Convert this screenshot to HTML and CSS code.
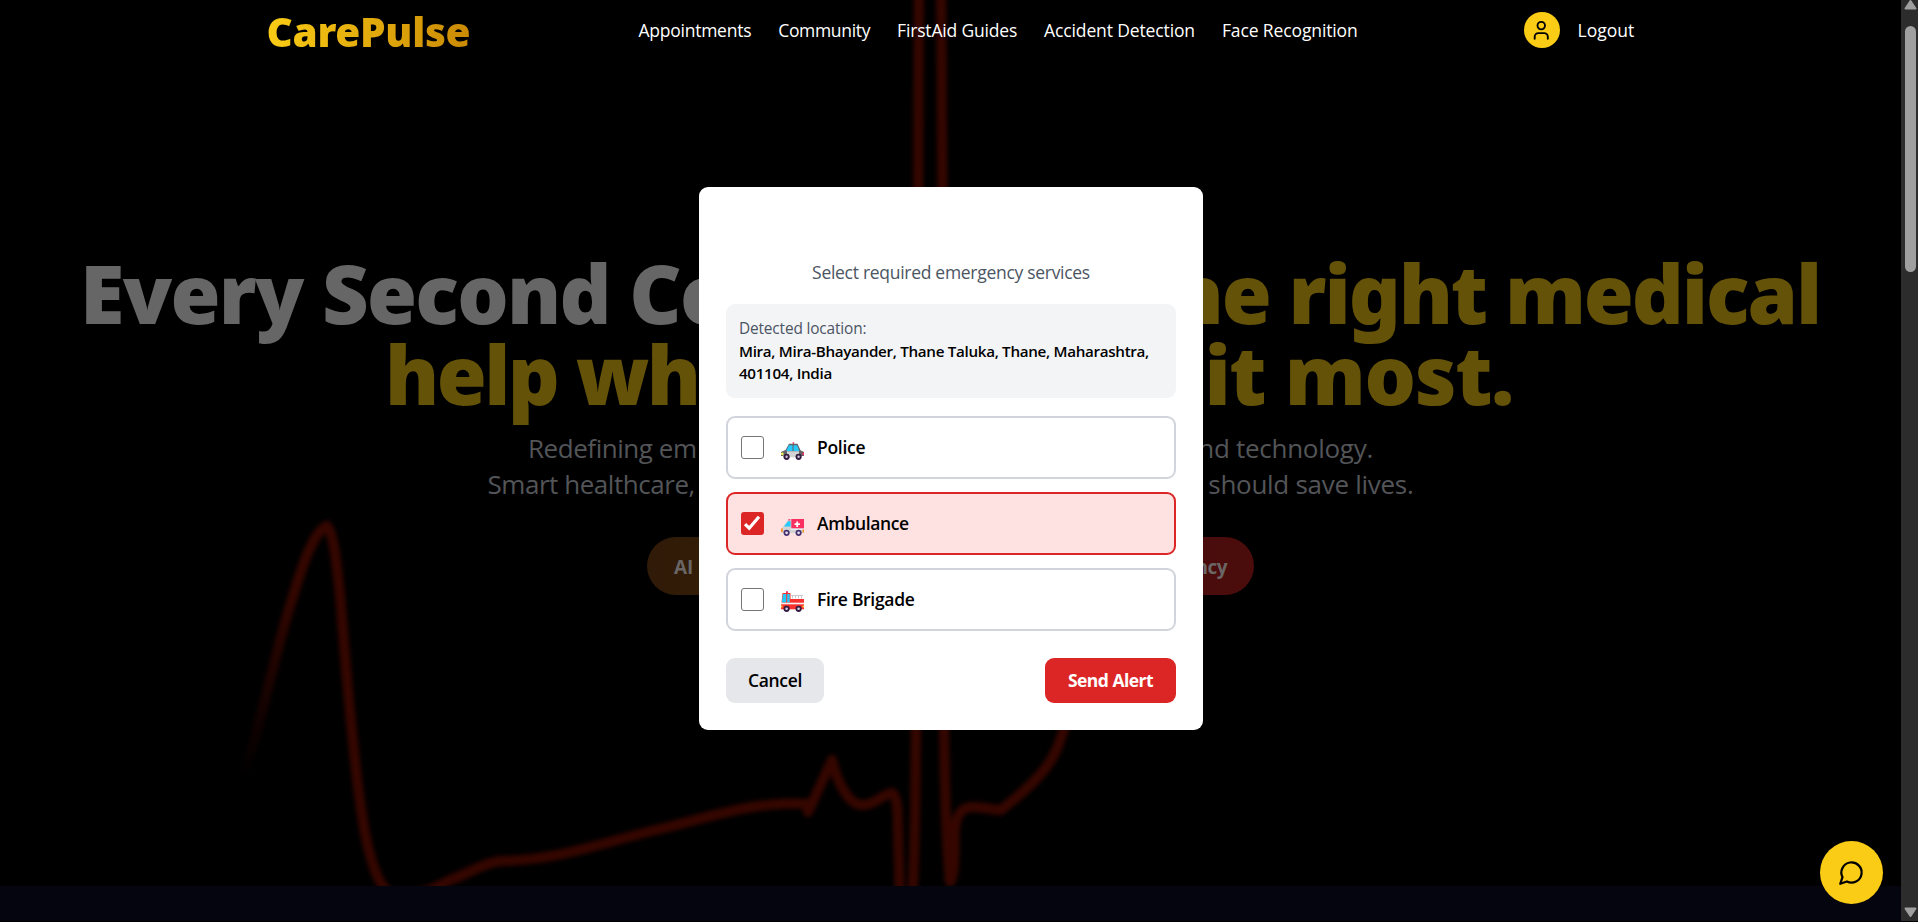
FILE: index.html
```
<!DOCTYPE html>
<html lang="en">
<head>
<meta charset="utf-8">
<title>CarePulse</title>
<link rel="stylesheet" href="styles.css">
</head>
<body>
<div class="page">
  <div class="content">
    <section class="hero">
      <svg class="pulse" viewBox="0 0 1901 886" width="1901" height="886" fill="none">
        <defs>
          <linearGradient id="fade" gradientUnits="userSpaceOnUse" x1="0" y1="780" x2="0" y2="590">
            <stop offset="0" stop-color="#350600" stop-opacity="0"/>
            <stop offset="1" stop-color="#350600"/>
          </linearGradient>
          <filter id="soft" filterUnits="userSpaceOnUse" color-interpolation-filters="sRGB" x="0" y="-60" width="1901" height="1000"><feGaussianBlur stdDeviation="2.2"/></filter>
        </defs>
        <g filter="url(#soft)" stroke-width="10" stroke-linecap="round" stroke-linejoin="round">
          <path stroke="url(#fade)" d="M244 775C262 720 274 657 290 606C300 573 312 532 327 526"/>
          <path stroke="#350600" d="M327 526C333 533 336 556 340 595C345 655 352 750 361 808C366 845 374 874 384 888C398 902 425 894 450 880C470 873 485 862 501 861C560 860 600 843 660 829C710 817 758 800 807 804L808 812L832 760C837 782 849 806 863 805C876 805 884 793 892 793C897 795 898 810 898 830L900 900M912 900C917 840 916 700 919 -20M941 -20C944 200 943 600 944 730C945 800 947 850 950 882C956 875 954 840 955 828C957 812 963 807 973 807C985 807 993 810 1001 810C1015 799 1035 783 1047 766C1057 753 1061 738 1066 722"/>
        </g>
      </svg>
      <header class="navbar">
        <div class="logo">CarePulse</div>
        <nav class="links">
          <a class="l1">Appointments</a><a class="l2">Community</a><a class="l3">FirstAid Guides</a><a class="l4">Accident Detection</a><a class="l5">Face Recognition</a>
        </nav>
        <div class="account">
          <span class="avatar"><svg viewBox="0 0 24 24" width="22.5" height="22.5" fill="none" stroke="#000" stroke-width="2" stroke-linecap="round" stroke-linejoin="round"><path d="M19 21v-2a4 4 0 0 0-4-4H9a4 4 0 0 0-4 4v2"/><circle cx="12" cy="7" r="4"/></svg></span>
          <a>Logout</a>
        </div>
      </header>
      <div class="intro">
        <h1>
          <span class="line first"><span class="t1">Every Second Co</span><span class="gold t2">the right medical</span></span>
          <span class="line second gold"><span class="t3">help wh</span><span class="t4">it most.</span></span>
        </h1>
        <p class="sub suba"><span>Redefining em</span><span class="end">and technology.</span></p>
        <p class="sub subb"><span>Smart healthcare,</span><span class="end">should save lives.</span></p>
        <div class="cta"><span class="pill amber">AI</span><span class="pill red">Emergency</span></div>
      </div>
    </section>
    <section class="next"></section>
    <div class="modal">
      <p class="prompt">Select required emergency services</p>
      <div class="location">
        <p class="label">Detected location:</p>
        <p class="place">Mira, Mira-Bhayander, Thane Taluka, Thane, Maharashtra,<br>401104, India</p>
      </div>
      <div class="options">
        <div class="option">
          <span class="box"></span>
          <svg class="emoji" viewBox="0 0 23 21" width="23" height="21"><path fill="#f92f60" d="M11.600 3.200h1.600v1.600h-1.600z"/><path fill="#636363" d="M8 4.800h8.500l3 6.400L23 13v4H0v-4l4.500-2z"/><path fill="#26c9fc" d="M7.800 6.300h3.700v5.700H5.200zM12.600 6.300h3.400l2.400 5.700h-5.800z"/><path fill="#d3d3d3" d="M6 12.200H18v6H2V16.500l4-1z"/><circle cx="1.300" cy="14.800" r="1.400" fill="#f3ef5a"/><path fill="#f92f60" d="M21.500 13.500H23v2.500h-1.500z"/><circle cx="5.600" cy="17.800" r="3.100" fill="#321b41"/><circle cx="17.600" cy="17.800" r="3.100" fill="#321b41"/><circle cx="5.600" cy="17.800" r="1.200" fill="#cdc4d6"/><circle cx="17.600" cy="17.800" r="1.200" fill="#cdc4d6"/></svg>
          <span class="n1">Police</span>
        </div>
        <div class="option checked">
          <span class="box"><svg viewBox="0 0 22 22" width="22" height="22" fill="none" stroke="#fff" stroke-width="3.200"><path d="M4 12.200l4.200 4L18 4.800"/></svg></span>
          <svg class="emoji" viewBox="0 0 23 21" width="23" height="21"><path fill="#f92f60" d="M7.300 4.200h2v2h-2z"/><path fill="#d3d3d3" d="M6.500 5.500H10V4h13v14H.600v-4.400l2.200-2.800z"/><path fill="#e9e9ee" d="M10 13h13v2H10z"/><path fill="#f92f60" d="M10.300 4H23v9.300H10.300z"/><path fill="#26c9fc" d="M7 6.200h2.600v5.400H3z"/><path fill="#fff" d="M15.300 6.500h1.800v1.800h1.800v1.800h-1.800V12h-1.800v-1.900h-1.800V8.300h1.800z"/><path fill="#f59323" d="M0 13.500h1.800v3.500H0zM21.500 14.500H23v3h-1.500z"/><circle cx="5.600" cy="17.800" r="3.100" fill="#46306f"/><circle cx="17.600" cy="17.800" r="3.100" fill="#46306f"/><circle cx="5.600" cy="17.800" r="1.400" fill="#e4dcec"/><circle cx="17.600" cy="17.800" r="1.400" fill="#e4dcec"/></svg>
          <span class="n2">Ambulance</span>
        </div>
        <div class="option">
          <span class="box"></span>
          <svg class="emoji" viewBox="0 0 23 21" width="23" height="21"><path fill="#f92f60" d="M5 .3h2v2H5z"/><path fill="#f8312f" d="M1.500 2h8v6H23v4H.500z"/><path fill="#26c9fc" d="M2 3h3.200v8.500H.800zM6.200 3h2.500v8.500H6.200z"/><path fill="none" stroke="#c9c9cf" d="M10 4.500h12M11.500 4.500v3M14.500 4.500v3M17.500 4.500v3M20.500 4.500v3"/><path fill="#f4f4f4" d="M0 11.700h23v1.600H0z"/><path fill="#f8312f" d="M0 13.300h23v5H0z"/><path fill="#f9c23c" d="M0 14.500h1.500v2H0zM21.500 14.500H23v2h-1.500z"/><circle cx="5.600" cy="17.800" r="3.100" fill="#321b41"/><circle cx="17.600" cy="17.800" r="3.100" fill="#321b41"/><circle cx="5.600" cy="17.800" r="1.300" fill="#dcd3e4"/><circle cx="17.600" cy="17.800" r="1.300" fill="#dcd3e4"/></svg>
          <span class="n3">Fire Brigade</span>
        </div>
      </div>
      <div class="actions"><span class="btn cancel">Cancel</span><span class="btn send">Send Alert</span></div>
    </div>
    <div class="fab"><svg viewBox="0 0 24 24" width="27" height="27" fill="none" stroke="#000" stroke-width="2" stroke-linecap="round" stroke-linejoin="round"><path d="M7.900 20A9 9 0 1 0 4 16.100L2 22Z"/></svg></div>
  </div>
  <div class="scrollbar">
    <svg width="13" height="10" viewBox="0 0 13 10"><path fill="#9f9f9f" stroke="#9f9f9f" stroke-linejoin="round" stroke-width="2" d="M6.500 1L11.500 8.500h-10z"/></svg>
    <span class="thumb"></span>
    <svg width="13" height="10" viewBox="0 0 13 10"><path fill="#9f9f9f" stroke="#9f9f9f" stroke-linejoin="round" stroke-width="2" d="M6.500 9L11.500 1.500h-10z"/></svg>
  </div>
</div>
</body>
</html>
```
FILE: styles.css
```
* { box-sizing: border-box; margin: 0; padding: 0; }
body { background: #000; color: #000; font-family: "Open Sans", "Noto Sans", sans-serif; font-size: 17.5px; line-height: 27px; overflow: hidden; }
.page { display: flex; width: 1918px; height: 922px; }
.content { position: relative; width: 1901px; height: 922px; }
.hero { position: relative; height: 886px; overflow: hidden; }
.pulse { position: absolute; left: 0; top: 0; }
.next { height: 35px; background: #05050f; }

.navbar { position: relative; display: grid; grid-template-columns: 372px 885px auto; align-items: center; width: 1368px; height: 60px; margin: 0 auto; color: #fff; }
.logo { justify-self: start; margin-top: 2px; font-family: "Noto Sans", sans-serif; font-size: 40.5px; font-weight: 900; line-height: 45px; letter-spacing: -0.3px; background: linear-gradient(to right, #facc15, #ca8a04); -webkit-background-clip: text; background-clip: text; color: transparent; }
.links { display: flex; gap: 27px; white-space: nowrap; }
.l1 { letter-spacing: -0.25px; }
.l2 { letter-spacing: -0.33px; }
.l3 { letter-spacing: -0.18px; }
.l4 { letter-spacing: -0.13px; }
.l5 { letter-spacing: -0.12px; }
.account { display: flex; align-items: center; gap: 18px; }
.avatar { display: flex; align-items: center; justify-content: center; width: 36px; height: 36px; border-radius: 50%; background: #facc15; }

.intro { position: relative; display: flex; flex-direction: column; align-items: center; padding-top: 191.5px; white-space: nowrap; }
h1 { display: flex; flex-direction: column; align-items: center; font-family: "Noto Sans", sans-serif; font-size: 81px; font-weight: 900; line-height: 81px; color: #666; }
.line { display: flex; justify-content: space-between; }
.first { width: 1741px; padding-right: 1px; }
.second { width: 1131px; padding-right: 3px; }
.gold { color: #645208; }
.t1 { letter-spacing: -1.75px; }
.t2 { letter-spacing: -2.1px; }
.t3 { letter-spacing: -2.6px; }
.t4 { letter-spacing: -1.4px; }
.sub { display: flex; justify-content: space-between; font-size: 26px; line-height: 36px; letter-spacing: -0.45px; color: #535558; }
.suba { width: 845px; margin-top: 16px; }
.subb { width: 926px; }
.end { letter-spacing: -0.28px; }
.cta { display: flex; justify-content: space-between; width: 607px; margin-top: 35.5px; }
.pill { width: 294px; height: 58px; padding: 0 27px; border-radius: 29px; font-size: 19px; font-weight: 700; line-height: 60px; color: #6a6665; }
.amber { background: linear-gradient(to right, #301a08, #3a2802); }
.red { text-align: right; letter-spacing: -0.5px; background: linear-gradient(to right, #3c0a0a, #4c0c0c); }

.modal { position: absolute; left: 699px; top: 187px; width: 504px; height: 543px; padding: 72px 27px 27px; border-radius: 9px; background: #fff; }
.prompt { text-align: center; letter-spacing: -0.29px; color: #4b5563; }
.location { height: 94px; margin-top: 18px; padding: 14px 13px 12px; border-radius: 9px; background: #f3f4f6; line-height: 22px; white-space: nowrap; }
.label { font-size: 15.4px; letter-spacing: -0.15px; color: #4b5563; }
.place { font-size: 15.2px; font-weight: 600; letter-spacing: -0.31px; }
.options { display: flex; flex-direction: column; gap: 13px; margin-top: 18px; }
.option { display: flex; align-items: center; height: 63px; padding: 0 13px; border: 2px solid #d1d5db; border-radius: 9px; font-weight: 600; }
.checked { border-color: #dc2626; background: #fee2e2; }
.box { display: flex; width: 23px; height: 23px; border: 1px solid #767676; border-radius: 3px; background: #fff; }
.checked .box { border: 0; background: #dc2626; }
.emoji { margin: 3px 13px 0 17px; }
.n1 { letter-spacing: -0.3px; }
.n2 { letter-spacing: -0.4px; }
.n3 { letter-spacing: -0.3px; }
.actions { display: flex; justify-content: space-between; margin-top: 27px; }
.btn { height: 45px; border-radius: 9px; line-height: 45px; text-align: center; }
.cancel { width: 98px; background: #e5e7eb; font-weight: 600; letter-spacing: -0.3px; }
.send { width: 131px; background: #dc2626; color: #fff; font-weight: 700; letter-spacing: -0.53px; }

.fab { position: absolute; left: 1820px; top: 841px; display: flex; align-items: center; justify-content: center; width: 63px; height: 63px; border-radius: 50%; background: #facc15; }
.scrollbar { display: flex; flex-direction: column; align-items: center; width: 17px; height: 921px; padding: 0 0 4px 2px; background: #2c2c2c; }
.thumb { width: 11px; height: 246px; margin: 16px 0 auto; border-radius: 6px; background: #9f9f9f; }
```
